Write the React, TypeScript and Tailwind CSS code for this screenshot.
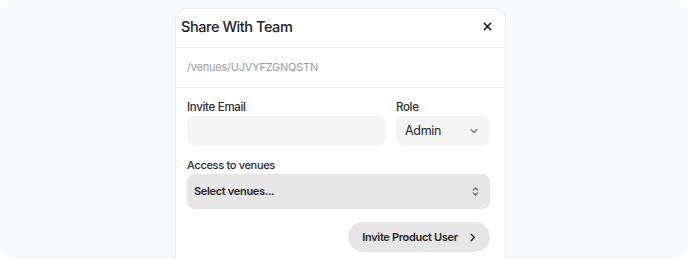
import React from "react";

function ChevronDown() {
  return (
    <svg width="12" height="12" viewBox="0 0 24 24" fill="none" stroke="currentColor" strokeWidth="2.2" strokeLinecap="round" strokeLinejoin="round">
      <path d="M6 9l6 6 6-6" />
    </svg>
  );
}

function ChevronsUpDown() {
  return (
    <svg width="11" height="11" viewBox="0 0 24 24" fill="none" stroke="currentColor" strokeWidth="2.4" strokeLinecap="round" strokeLinejoin="round">
      <path d="M7 9l5-5 5 5" />
      <path d="M7 15l5 5 5-5" />
    </svg>
  );
}

function ChevronRight() {
  return (
    <svg width="11" height="11" viewBox="0 0 24 24" fill="none" stroke="currentColor" strokeWidth="3" strokeLinecap="round" strokeLinejoin="round">
      <path d="M9 5l7 7-7 7" />
    </svg>
  );
}

function CloseIcon() {
  return (
    <svg width="11" height="11" viewBox="0 0 24 24" fill="none" stroke="currentColor" strokeWidth="3.5" strokeLinecap="round">
      <path d="M5 5l14 14M19 5L5 19" />
    </svg>
  );
}

export default function App() {
  return (
    <div
      className="w-[688px] h-[259px] bg-[#f8f9fb] rounded-2xl overflow-hidden flex justify-center pt-[8px] pr-[7px]"
      style={{ fontFamily: "Inter, 'Noto Sans', sans-serif" }}
    >
      <div className="w-[331px] bg-white border border-[#eceef1] border-b-0 rounded-t-xl shadow-[0_1px_3px_rgba(0,0,0,0.03)]">
        <div className="h-[39px] flex items-center justify-between pl-[5px] pr-[12px] pb-[3px] border-b border-[#f0f1f3]">
          <span className="text-[14.5px] tracking-[-0.03em] font-medium text-[#1f2328]">Share With Team</span>
          <span className="text-[#111]">
            <CloseIcon />
          </span>
        </div>
        <div className="h-[40px] flex items-center pl-[11px] border-b border-[#f0f1f3]">
          <span className="text-[11px] tracking-[-0.02em] text-[#9aa0a8]">/venues/UJVYFZGNQSTN</span>
        </div>
        <div className="pl-[11px] pr-[15px] pt-[11px] tracking-[-0.02em]">
          <div className="flex gap-[10px]">
            <div className="w-[199px] flex flex-col">
              <label className="text-[11.5px] leading-4 font-medium text-[#2a2a2a] mb-[1px]">Invite Email</label>
              <div className="h-[30px] rounded-lg bg-[#f5f5f6]" />
            </div>
            <div className="w-[94px] flex flex-col">
              <label className="text-[11.5px] leading-4 font-medium text-[#2a2a2a] mb-[1px]">Role</label>
              <div className="h-[30px] rounded-lg bg-[#f5f5f6] flex items-center justify-between pl-[9px] pr-[10px]">
                <span className="text-[12.5px] text-[#222]">Admin</span>
                <span className="text-[#6b6f76]">
                  <ChevronDown />
                </span>
              </div>
            </div>
          </div>
          <label className="block mt-[11px] text-[11px] leading-4 font-medium text-[#2a2a2a] mb-[1px]">Access to venues</label>
          <div className="h-[35px] rounded-lg bg-[#e6e6e7] flex items-center justify-between pl-[7px] pr-[9px]">
            <span className="text-[11px] font-semibold text-[#262626]">Select venues...</span>
            <span className="text-[#55595f]">
              <ChevronsUpDown />
            </span>
          </div>
          <div className="flex justify-end mt-[13px]">
            <button className="h-[30px] w-[142px] rounded-full bg-[#e6e6e7] flex items-center justify-center gap-[9px] text-[11px] font-semibold text-[#262626] pl-[2px]">
              Invite Product User
              <ChevronRight />
            </button>
          </div>
        </div>
      </div>
    </div>
  );
}
